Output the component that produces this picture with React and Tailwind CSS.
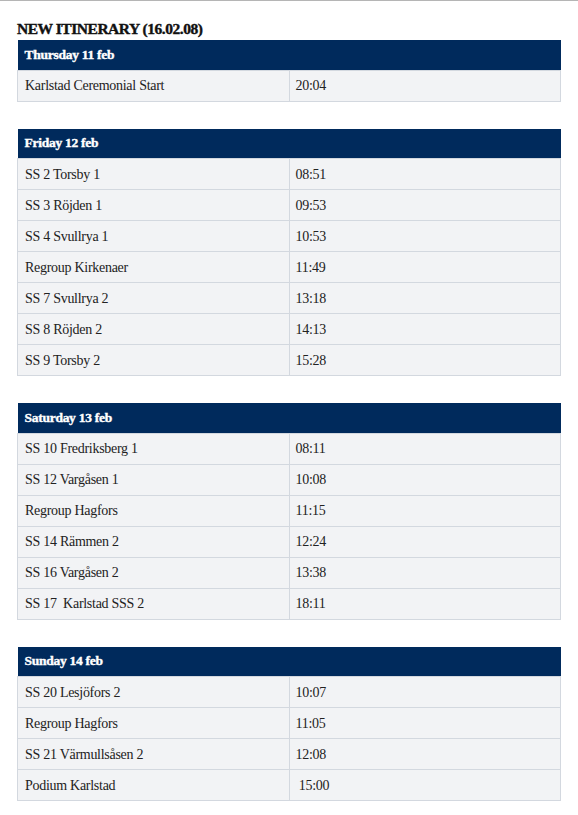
const days = [
  {
    title: "Thursday 11 feb",
    rows: [["Karlstad Ceremonial Start", "20:04"]],
  },
  {
    title: "Friday 12 feb",
    rows: [
      ["SS 2 Torsby 1", "08:51"],
      ["SS 3 Röjden 1", "09:53"],
      ["SS 4 Svullrya 1", "10:53"],
      ["Regroup Kirkenaer", "11:49"],
      ["SS 7 Svullrya 2", "13:18"],
      ["SS 8 Röjden 2", "14:13"],
      ["SS 9 Torsby 2", "15:28"],
    ],
  },
  {
    title: "Saturday 13 feb",
    rows: [
      ["SS 10 Fredriksberg 1", "08:11"],
      ["SS 12 Vargåsen 1", "10:08"],
      ["Regroup Hagfors", "11:15"],
      ["SS 14 Rämmen 2", "12:24"],
      ["SS 16 Vargåsen 2", "13:38"],
      ["SS 17  Karlstad SSS 2", "18:11"],
    ],
  },
  {
    title: "Sunday 14 feb",
    rows: [
      ["SS 20 Lesjöfors 2", "10:07"],
      ["Regroup Hagfors", "11:05"],
      ["SS 21 Värmullsåsen 2", "12:08"],
      ["Podium Karlstad", "\u00a015:00"],
    ],
  },
];

function DayTable({ title, rows }) {
  return (
    <table className="w-[544px] border-collapse table-fixed">
      <thead>
        <tr>
          <th
            colSpan={2}
            className="h-[30px] bg-[#002a5c] px-[7px] text-left align-middle text-[13.5px] font-bold tracking-[-0.02em] text-white [-webkit-text-stroke:0.4px_white]"
          >
            {title}
          </th>
        </tr>
      </thead>
      <tbody>
        {rows.map(([name, time], i) => (
          <tr key={i} className="h-[31px] bg-[#f2f3f5]">
            <td className="w-[272px] border border-[#d3d8df] px-[7px] align-middle text-[14px] tracking-[-0.02em] text-[#222] whitespace-pre">
              {name}
            </td>
            <td className="border border-[#d3d8df] px-[6px] align-middle text-[14px] tracking-[-0.02em] text-[#222] whitespace-pre">
              {time}
            </td>
          </tr>
        ))}
      </tbody>
    </table>
  );
}

export default function App() {
  return (
    <div className="min-h-[815px] w-[578px] border-t border-[#b5b5b5] bg-white font-['Liberation_Serif',serif]">
      <h2 className="px-[17px] pt-[19px] pb-[2px] text-[15.5px] leading-[18px] font-bold tracking-[-0.03em] text-[#111] [-webkit-text-stroke:0.4px_#111]">
        NEW ITINERARY (16.02.08)
      </h2>
      <div className="flex flex-col gap-[27px] px-[17px]">
        {days.map((d) => (
          <DayTable key={d.title} {...d} />
        ))}
      </div>
    </div>
  );
}
